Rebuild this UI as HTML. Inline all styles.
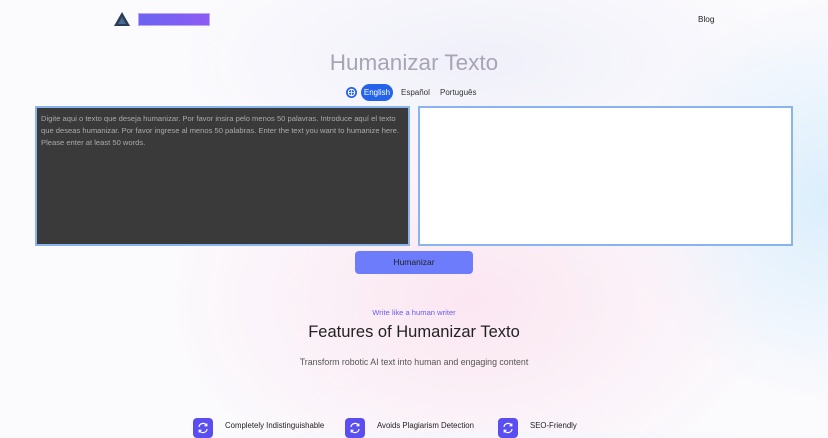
<!DOCTYPE html>
<html><head><meta charset="utf-8"><style>
*{box-sizing:border-box;margin:0;padding:0}
body{width:828px;height:432px;overflow:hidden;font-family:"Liberation Sans",sans-serif;position:relative;
background:radial-gradient(ellipse 300px 200px at 470px 300px,#fbe6f1 0%,rgba(251,230,241,0) 100%),radial-gradient(ellipse 200px 200px at 828px 200px,#dbeefc 0%,rgba(219,238,252,0) 100%),radial-gradient(ellipse 300px 120px at 480px 60px,#f0f0fa 0%,rgba(240,240,250,0) 100%),#fbfafd}
.abs{position:absolute}
.ic{width:20px;height:20px;border-radius:4px;background:#5b4ef0}
.ic svg{position:absolute;left:4px;top:4px}
</style></head><body>
<svg class="abs" style="left:114px;top:12px" width="16" height="14" viewBox="0 0 16 14"><path d="M8 0L16 14H0Z" fill="#2b3c58"/><path d="M8 5L12 12H4Z" fill="#4a6a90"/></svg>
<div class="abs" style="left:138px;top:13px;width:72px;height:13px;background:linear-gradient(90deg,#6b63f0,#8d5cf5);border:1px solid #b9a8f8"></div>
<div class="abs" style="left:698px;top:15px;font-size:8.2px;color:#222">Blog</div>
<div class="abs" style="left:0;width:828px;top:50px;text-align:center;font-size:22.5px;color:#a9a4b5">Humanizar Texto</div>
<svg class="abs" style="left:346px;top:87px" width="11" height="11" viewBox="0 0 11 11"><circle cx="5.5" cy="5.5" r="5.5" fill="#2563eb"/><circle cx="5.5" cy="5.5" r="3.2" fill="none" stroke="#fff" stroke-width="1"/><path d="M2.3 5.5H8.7M5.5 2.3V8.7" stroke="#fff" stroke-width=".8"/></svg>
<div class="abs" style="left:361px;top:84px;width:32px;height:17px;border-radius:9px;background:#2563eb;color:#fff;font-size:8px;line-height:17px;text-align:center">English</div>
<div class="abs" style="left:401px;top:88px;font-size:8px;color:#333">Español</div>
<div class="abs" style="left:440px;top:88px;font-size:8px;color:#333">Português</div>
<div class="abs" style="left:35px;top:106px;width:375px;height:140px;background:#3a3a3a;border:2px solid #8ab4f0;padding:5px 4px;font-size:7.6px;line-height:12px;color:#aaa">Digite aqui o texto que deseja humanizar. Por favor insira pelo menos 50 palavras. Introduce aquí el texto que deseas humanizar. Por favor ingrese al menos 50 palabras. Enter the text you want to humanize here. Please enter at least 50 words.</div>
<div class="abs" style="left:418px;top:106px;width:375px;height:140px;background:#fff;border:2px solid #8ab4f0"></div>
<div class="abs" style="left:355px;top:251px;width:118px;height:23px;border-radius:4px;background:#6d7cfb;color:#222;font-size:8.5px;line-height:23px;text-align:center">Humanizar</div>
<div class="abs" style="left:0;width:828px;top:308px;text-align:center;font-size:7.6px;color:#6a5cf0">Write like a human writer</div>
<div class="abs" style="left:0;width:828px;top:323px;text-align:center;font-size:16.5px;color:#222">Features of Humanizar Texto</div>
<div class="abs" style="left:0;width:828px;top:357px;text-align:center;font-size:8.8px;color:#555">Transform robotic AI text into human and engaging content</div>
<div class="abs ic" style="left:193px;top:418px"><svg width="12" height="12" viewBox="0 0 12 12" fill="none" stroke="#fff" stroke-width="1.2"><path d="M2 5A4 4 0 0 1 9.5 3.5M10 7A4 4 0 0 1 2.5 8.5"/><path d="M9.8 1.5V3.8H7.5M2.2 10.5V8.2H4.5"/></svg></div>
<div class="abs" style="left:225px;top:421px;font-size:7.8px;color:#222">Completely Indistinguishable</div>
<div class="abs ic" style="left:345px;top:418px"><svg width="12" height="12" viewBox="0 0 12 12" fill="none" stroke="#fff" stroke-width="1.2"><path d="M2 5A4 4 0 0 1 9.5 3.5M10 7A4 4 0 0 1 2.5 8.5"/><path d="M9.8 1.5V3.8H7.5M2.2 10.5V8.2H4.5"/></svg></div>
<div class="abs" style="left:377px;top:421px;font-size:7.8px;color:#222">Avoids Plagiarism Detection</div>
<div class="abs ic" style="left:498px;top:418px"><svg width="12" height="12" viewBox="0 0 12 12" fill="none" stroke="#fff" stroke-width="1.2"><path d="M2 5A4 4 0 0 1 9.5 3.5M10 7A4 4 0 0 1 2.5 8.5"/><path d="M9.8 1.5V3.8H7.5M2.2 10.5V8.2H4.5"/></svg></div>
<div class="abs" style="left:530px;top:421px;font-size:7.8px;color:#222">SEO-Friendly</div>
</body></html>
